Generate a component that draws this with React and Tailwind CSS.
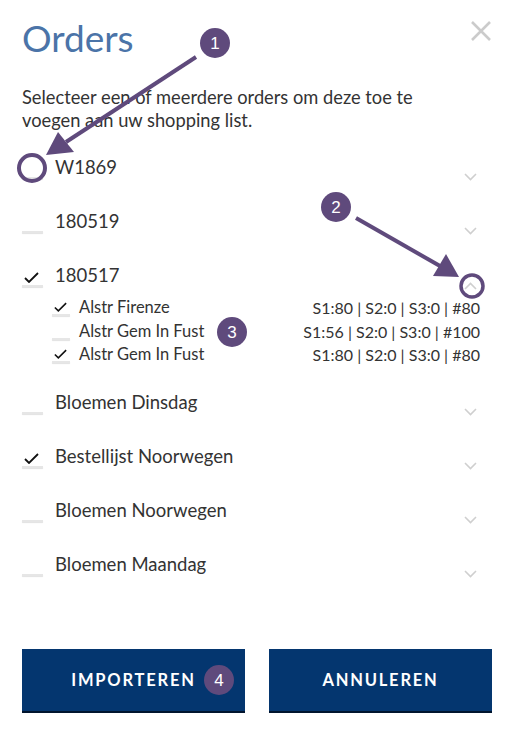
import React from 'react';

const orders = [
  { name: 'W1869', checked: false },
  { name: '180519', checked: false },
  {
    name: '180517',
    checked: true,
    open: true,
    lines: [
      { name: 'Alstr Firenze', stock: 'S1:80 | S2:0 | S3:0 | #80', checked: true },
      { name: 'Alstr Gem In Fust', stock: 'S1:56 | S2:0 | S3:0 | #100', checked: false },
      { name: 'Alstr Gem In Fust', stock: 'S1:80 | S2:0 | S3:0 | #80', checked: true }
    ]
  },
  { name: 'Bloemen Dinsdag', checked: false },
  { name: 'Bestellijst Noorwegen', checked: true },
  { name: 'Bloemen Noorwegen', checked: false },
  { name: 'Bloemen Maandag', checked: false }
];

function Check({ checked, small }) {
  return (
    <div className={small ? 'relative w-[18px] h-[20px] shrink-0' : 'relative w-[21px] h-[24px] shrink-0'}>
      {checked && (
        <svg
          className={small ? 'absolute left-[2px] top-[6px]' : 'absolute left-[2px] top-[9px]'}
          width={small ? 13 : 15}
          height={small ? 10 : 11}
          viewBox="0 0 15 11"
          fill="none"
        >
          <path d="M1 6 L5 10 L14 1" stroke="#111" strokeWidth="1.8" />
        </svg>
      )}
      <div className="absolute bottom-0 left-0 right-0 h-[2px] bg-[#e6e6e6] shadow-[0_1px_1px_rgba(0,0,0,0.12)]" />
    </div>
  );
}

function Chevron({ up }) {
  return (
    <svg width="13" height="8" viewBox="0 0 13 8" fill="none" className="shrink-0">
      <path d={up ? 'M1 7 L6.5 1.5 L12 7' : 'M1 1 L6.5 6.5 L12 1'} stroke="#cfcfcf" strokeWidth="1.6" />
    </svg>
  );
}

function Annotations() {
  const purple = '#5f4a7c';
  return (
    <svg className="pointer-events-none absolute left-0 top-0" width="514" height="733" viewBox="0 0 514 733">
      {/* arrow 1 */}
      <line x1="196" y1="57" x2="66" y2="142" stroke={purple} strokeWidth="4" />
      <polygon points="46,155 58,132 74,152" fill={purple} />
      <circle cx="32" cy="168" r="13" fill="none" stroke={purple} strokeWidth="4" />
      {/* arrow 2 */}
      <line x1="356" y1="218" x2="440" y2="266" stroke={purple} strokeWidth="4" />
      <polygon points="459,277 433,276 446,254" fill={purple} />
      <circle cx="472" cy="286" r="11" fill="none" stroke={purple} strokeWidth="3.5" />
      {[
        [215, 43, '1'],
        [336, 207, '2'],
        [232, 332, '3'],
        [219, 680, '4']
      ].map(([x, y, n]) => (
        <g key={n}>
          <circle cx={x} cy={y} r="15" fill={purple} />
          <text
            x={x}
            y={y + 6}
            textAnchor="middle"
            fill="#fff"
            fontSize="17"
            fontFamily="'Liberation Sans', Arial, sans-serif"
          >
            {n}
          </text>
        </g>
      ))}
    </svg>
  );
}

export default function App() {
  return (
    <div className="relative w-[514px] h-[733px] bg-white text-[#333] font-['Lato',sans-serif] overflow-hidden">
      <div className="px-[22px] pt-[16px]">
        {/* Header */}
        <div className="flex items-start justify-between">
          <h1 className="text-[37px] leading-[44px] text-[#4b74a8] font-normal">Orders</h1>
          <svg width="22" height="22" viewBox="0 0 22 22" className="mt-[4px]">
            <path d="M2 2 L20 20 M20 2 L2 20" stroke="#cbcbcb" strokeWidth="2.6" />
          </svg>
        </div>

        <p className="mt-[26px] text-[18.3px] leading-[23px] w-[420px]">
          Selecteer een of meerdere orders om deze toe te voegen aan uw shopping list.
        </p>

        {/* Order list */}
        <div className="mt-[23px] mr-[12px]">
          {orders.map((o, i) => (
            <div key={i} className={o.open ? 'h-[127px]' : 'h-[54px]'}>
              <div className="flex items-start">
                <Check checked={o.checked} />
                <span className="ml-[12px] text-[18.5px] leading-[24px]">{o.name}</span>
                <div className={o.open ? 'ml-auto mt-[19px] mr-[3px]' : 'ml-auto mt-[18px] mr-[3px]'}>
                  <Chevron up={o.open} />
                </div>
              </div>
              {o.open && (
                <div className="mt-[6px] pl-[30px]">
                  {o.lines.map((l, j) => (
                    <div key={j} className="flex items-start h-[23.5px]">
                      <Check checked={l.checked} small />
                      <span className="ml-[9px] text-[16.5px] leading-[23px]">{l.name}</span>
                      <span className="ml-auto text-[16px] leading-[23px]">{l.stock}</span>
                    </div>
                  ))}
                </div>
              )}
            </div>
          ))}
        </div>

        {/* Buttons */}
        <div className="mt-[43px] flex gap-[24px]">
          <button className="w-[223px] h-[62px] bg-[#04366f] text-white text-[16.5px] font-bold tracking-[1.8px] uppercase shadow-[0_2px_0_#01152e]">
            Importeren
          </button>
          <button className="w-[223px] h-[62px] bg-[#04366f] text-white text-[16.5px] font-bold tracking-[1.8px] uppercase shadow-[0_2px_0_#01152e]">
            Annuleren
          </button>
        </div>
      </div>
      <Annotations />
    </div>
  );
}
